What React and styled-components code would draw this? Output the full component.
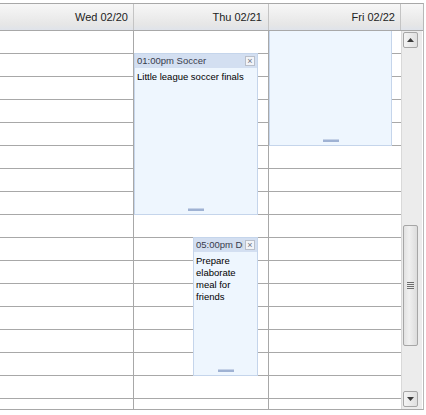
import React from "react";
import styled, { createGlobalStyle } from "styled-components";

const Global = createGlobalStyle`
  html, body { margin: 0; padding: 0; background: #fff; }
  body { font-family: "Liberation Sans", Arial, sans-serif; }
`;

const Calendar = styled.div`
  margin-top: 3px;
  width: 423px;
  border-top: 1px solid #a8a8a8;
  border-bottom: 1px solid #a8a8a8;
  border-right: 1px solid #b8b8b8;
  box-sizing: content-box;
`;

const HeaderRow = styled.div`
  display: flex;
  height: 26px;
  border-bottom: 1px solid #a8a8a8;
  background: linear-gradient(#f7f7f7, #e6e6e6 80%, #dfe3ea);
`;

const HeaderCell = styled.div`
  width: ${(p) => p.$w}px;
  flex-shrink: 0;
  box-sizing: border-box;
  border-right: 1px solid #c4c4c4;
  display: flex;
  align-items: center;
  justify-content: flex-end;
  padding-right: ${(p) => p.$pad}px;
  font-size: 11px;
  color: #222;
  white-space: nowrap;
  &:last-child { border-right: none; }
`;

const Body = styled.div`
  display: flex;
  height: 378px;
`;

const Days = styled.div`
  display: flex;
  width: 401px;
  overflow: hidden;
`;

const DayColumn = styled.div`
  position: relative;
  width: ${(p) => p.$w}px;
  box-sizing: border-box;
  border-right: ${(p) => (p.$last ? "none" : "1px solid #a8a8a8")};
  flex-shrink: 0;
`;

const Slot = styled.div`
  height: 22px;
  border-bottom: 1px solid #a8a8a8;
`;

const Event = styled.div`
  position: absolute;
  box-sizing: border-box;
  border: 1px solid #c5d5eb;
  background: #eef6fe;
  overflow: hidden;
`;

const EventTitle = styled.div`
  display: flex;
  align-items: center;
  height: 14px;
  background: #d3dff1;
  padding: 0 2px;
  gap: 2px;
`;

const TitleText = styled.span`
  flex: 1;
  min-width: 0;
  overflow: hidden;
  white-space: nowrap;
  font-size: 9.5px;
  line-height: 14px;
  color: #383c4c;
`;

const CloseBox = styled.span`
  flex-shrink: 0;
  width: 8px;
  height: 8px;
  border: 1px solid #b9bfca;
  background: #f2f4f8;
  color: #6f7480;
  font-size: 9px;
  line-height: 8px;
  text-align: center;
`;

const EventText = styled.div`
  font-size: 9.5px;
  line-height: 12px;
  color: #000;
  padding: 3px 2px 0 2px;
`;

const Grip = styled.div`
  position: absolute;
  left: 50%;
  bottom: 3px;
  width: 16px;
  margin-left: -8px;
  height: 2px;
  background: #9fb2d3;
  border-top: 1px solid #c6d3e8;
  box-sizing: content-box;
`;

const ScrollBar = styled.div`
  width: 21px;
  box-sizing: border-box;
  border-left: 1px solid #d9d9d9;
  background: #ececec;
  display: flex;
  flex-direction: column;
  padding: 1px 0 2px 1px;
`;

const ScrollButton = styled.div`
  width: 15px;
  height: 16px;
  box-sizing: border-box;
  border: 1px solid #a6a6a6;
  border-radius: 2px;
  background: linear-gradient(90deg, #f4f4f4, #e0e0e0);
  display: flex;
  align-items: center;
  justify-content: center;
  flex-shrink: 0;
`;

const Track = styled.div`
  flex: 1;
  display: flex;
  flex-direction: column;
  padding-top: 177px;
`;

const Thumb = styled.div`
  width: 15px;
  height: 121px;
  box-sizing: border-box;
  border: 1px solid #a6a6a6;
  border-radius: 2px;
  background: linear-gradient(90deg, #e2e2e2, #f0f0f0 40%, #dcdcdc);
  display: flex;
  align-items: center;
  justify-content: center;
`;

const GripLines = styled.div`
  display: flex;
  flex-direction: column;
  gap: 1px;
  & > span {
    width: 7px;
    height: 1px;
    background: #6e6e6e;
  }
`;

const Arrow = ({ down }) => (
  <svg width="7" height="4" viewBox="0 0 7 4">
    {down ? <path d="M0 0H7L3.5 4Z" fill="#3c3c3c" /> : <path d="M0 4H7L3.5 0Z" fill="#3c3c3c" />}
  </svg>
);

const columns = [
  { key: "wed", label: "Wed 02/20", w: 134, pad: 5 },
  { key: "thu", label: "Thu 02/21", w: 135, pad: 6 },
  { key: "fri", label: "Fri 02/22", w: 132, pad: 5 },
];

const events = {
  thu: [
    { id: 1, left: 0, top: 22, width: 124, height: 162, title: "01:00pm Soccer", text: "Little league soccer finals" },
    { id: 2, left: 59, top: 206, width: 65, height: 139, title: "05:00pm Dinner", text: "Prepare elaborate meal for friends" },
  ],
  fri: [{ id: 3, left: 0, top: -22, width: 123, height: 137, title: "", text: "" }],
};

const slots = Array.from({ length: 17 }, (_, i) => i);

export default function App() {
  return (
    <>
      <Global />
      <Calendar>
        <HeaderRow>
          {columns.map((c) => (
            <HeaderCell key={c.key} $w={c.w} $pad={c.pad}>
              {c.label}
            </HeaderCell>
          ))}
          <HeaderCell $w={22} $pad={0} />
        </HeaderRow>
        <Body>
          <Days>
            {columns.map((c, i) => (
              <DayColumn key={c.key} $w={c.w} $last={i === columns.length - 1}>
                {slots.map((s) => (
                  <Slot key={s} />
                ))}
                {(events[c.key] || []).map((e) => (
                  <Event key={e.id} style={{ left: e.left, top: e.top, width: e.width, height: e.height }}>
                    <EventTitle>
                      <TitleText>{e.title}</TitleText>
                      <CloseBox>×</CloseBox>
                    </EventTitle>
                    <EventText>{e.text}</EventText>
                    <Grip />
                  </Event>
                ))}
              </DayColumn>
            ))}
          </Days>
          <ScrollBar>
            <ScrollButton>
              <Arrow />
            </ScrollButton>
            <Track>
              <Thumb>
                <GripLines>
                  <span />
                  <span />
                  <span />
                  <span />
                </GripLines>
              </Thumb>
            </Track>
            <ScrollButton>
              <Arrow down />
            </ScrollButton>
          </ScrollBar>
        </Body>
      </Calendar>
    </>
  );
}
